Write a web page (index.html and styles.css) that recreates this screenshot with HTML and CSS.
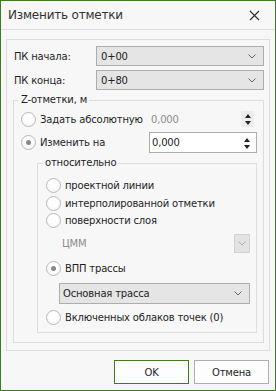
FILE: index.html
```html
<!DOCTYPE html>
<html lang="ru">
<head>
<meta charset="utf-8">
<title>Изменить отметки</title>
<link rel="stylesheet" href="styles.css">
</head>
<body>
<div class="win">
  <div class="titlebar">
    <span class="title">Изменить отметки</span>
    <svg class="close" width="11" height="11" viewBox="0 0 11 11"><path d="M1 1 L10 10 M10 1 L1 10" stroke="#333" stroke-width="1.2" fill="none"/></svg>
  </div>
  <div class="content">
    <div class="panel">
      <div class="row first">
        <span class="lbl">ПК начала:</span>
        <div class="select pk"><span>0+00</span><svg class="chev" width="8" height="5" viewBox="0 0 8 5"><path d="M0.5 0.5 L4 4 L7.5 0.5" stroke="#666" fill="none"/></svg></div>
      </div>
      <div class="row second">
        <span class="lbl">ПК конца:</span>
        <div class="select pk"><span>0+80</span><svg class="chev" width="8" height="5" viewBox="0 0 8 5"><path d="M0.5 0.5 L4 4 L7.5 0.5" stroke="#666" fill="none"/></svg></div>
      </div>
      <fieldset class="grp zgrp">
        <legend>Z-отметки, м</legend>
        <div class="zrow abs">
          <span class="radio"></span>
          <span class="rtext">Задать абсолютную</span>
          <span class="dval">0,000</span>
          <span class="spin dis"><i class="up"></i><i class="down"></i></span>
        </div>
        <div class="zrow chg">
          <span class="radio on"></span>
          <span class="rtext">Изменить на</span>
          <div class="input"><span>0,000</span><span class="spin"><i class="up"></i><i class="down"></i></span></div>
        </div>
        <fieldset class="grp relgrp">
          <legend>относительно</legend>
          <div class="rrow h18"><span class="radio"></span><span class="rtext">проектной линии</span></div>
          <div class="rrow h18"><span class="radio"></span><span class="rtext">интерполированной отметки</span></div>
          <div class="rrow h17"><span class="radio"></span><span class="rtext">поверхности слоя</span></div>
          <div class="dtmrow">
            <span class="dtm">ЦММ</span>
            <span class="dbtn"><svg width="8" height="5" viewBox="0 0 8 5"><path d="M0.5 0.5 L4 4 L7.5 0.5" stroke="#b0b0b0" fill="none"/></svg></span>
          </div>
          <div class="rrow vpp"><span class="radio on"></span><span class="rtext">ВПП трассы</span></div>
          <div class="select route"><span>Основная трасса</span><svg class="chev" width="8" height="5" viewBox="0 0 8 5"><path d="M0.5 0.5 L4 4 L7.5 0.5" stroke="#666" fill="none"/></svg></div>
          <div class="rrow last"><span class="radio"></span><span class="rtext">Включенных облаков точек (0)</span></div>
        </fieldset>
      </fieldset>
    </div>
    <div class="buttons">
      <button class="btn ok">OK</button>
      <button class="btn">Отмена</button>
    </div>
  </div>
</div>
</body>
</html>
```
FILE: styles.css
```css
* { box-sizing: border-box; }
html, body { margin: 0; padding: 0; }
body {
  width: 276px;
  height: 391px;
  font-family: "DejaVu Sans", "Liberation Sans", sans-serif;
  font-size: 10px;
  letter-spacing: -0.18px;
  color: #1e1e1e;
  background: #f7f7f7;
}
.win {
  width: 276px;
  height: 391px;
  border: 1px solid #3d7b22;
  background: #f7f7f7;
  display: flex;
  flex-direction: column;
}
.titlebar {
  height: 29px;
  border-bottom: 1px solid #dedede;
  display: flex;
  align-items: center;
  justify-content: space-between;
  padding: 0 15px 0 7px;
  flex: none;
}
.title {
  font-size: 12px;
  letter-spacing: -0.2px;
  color: #333;
}
.close { display: block; margin-top: 1px; }
.content {
  flex: 1;
  display: flex;
  flex-direction: column;
}
.panel {
  margin: 9px 0 0 5px;
  width: 264px;
  height: 312px;
  border: 1px solid #dcdcdc;
  display: flex;
  flex-direction: column;
}
.row {
  display: flex;
  align-items: center;
  height: 20px;
}
.row.first { margin-top: 6px; }
.row.second { margin-top: 4px; }
.lbl {
  width: 89px;
  padding-left: 7px;
  flex: none;
}
.select {
  height: 20px;
  border: 1px solid #adadad;
  background: #e5e5e5;
  display: flex;
  align-items: center;
  justify-content: space-between;
  padding: 0 7px 0 4px;
}
.select.pk { width: 168px; }
.chev { display: block; }
.grp {
  margin: 0;
  padding: 0;
  border: 1px solid #dcdcdc;
  min-width: 0;
}
.grp legend {
  padding: 0 2px;
  line-height: 14px;
  height: 14px;
  color: #1e1e1e;
}
.zgrp {
  margin: 3px 0 0 6px;
  width: 251px;
  height: 250px;
  display: flex;
  flex-direction: column;
}
.zgrp > legend { margin-left: 5px; }
.zrow {
  display: flex;
  align-items: center;
}
.zrow.abs { height: 18px; margin-top: 3px; }
.zrow.chg { height: 21px; margin-top: 4px; }
.radio {
  width: 15px;
  height: 15px;
  border-radius: 50%;
  border: 1px solid #b9b9b9;
  background: radial-gradient(circle at 50% 40%, #ffffff 40%, #f0f0f0 100%);
  flex: none;
  display: flex;
  align-items: center;
  justify-content: center;
}
.radio.on::after {
  content: "";
  width: 5px;
  height: 5px;
  border-radius: 50%;
  background: #8a8a8a;
}
.zrow .radio { margin-left: 7px; }
.rtext { margin-left: 4px; white-space: nowrap; }
.abs .rtext { width: 111px; flex: none; }
.dval {
  color: #8c8c8c;
}
.spin {
  width: 13px;
  height: 16px;
  display: flex;
  flex-direction: column;
  align-items: center;
  justify-content: space-between;
  padding: 3px 0 2px;
}
.spin.dis {
  margin-left: auto;
  margin-right: 9px;
  background: #ececec;
}
.spin i {
  display: block;
  width: 0;
  height: 0;
  border-left: 3.5px solid transparent;
  border-right: 3.5px solid transparent;
}
.spin .up { border-bottom: 4px solid #222; }
.spin .down { border-top: 4px solid #222; }
.chg .rtext { width: 109px; flex: none; }
.input {
  width: 108px;
  height: 21px;
  border: 1px solid #acacac;
  background: #ffffff;
  display: flex;
  align-items: center;
  justify-content: space-between;
  padding: 0 3px 0 2px;
}
.relgrp {
  margin: 3px 0 0 23px;
  width: 220px;
  height: 177px;
  display: flex;
  flex-direction: column;
}
.relgrp > legend { margin-left: 5px; }
.rrow {
  display: flex;
  align-items: center;
}
.rrow .radio { margin-left: 8px; }
.rrow.h18 { height: 18px; }
.rrow.h17 { height: 17px; }
.rrow:first-of-type { margin-top: 6px; }
.dtmrow {
  display: flex;
  align-items: center;
  height: 19px;
  margin-top: 5px;
}
.dtm {
  margin-left: 24px;
  color: #8c8c8c;
}
.dbtn {
  margin-left: auto;
  margin-right: 6px;
  width: 16px;
  height: 19px;
  border: 1px solid #d2d2d2;
  background: #e3e3e3;
  display: flex;
  align-items: center;
  justify-content: center;
}
.rrow.vpp { height: 18px; margin-top: 6px; }
.select.route {
  width: 191px;
  height: 21px;
  margin: 6px 0 0 21px;
  padding-left: 3px;
}
.rrow.last { height: 18px; margin-top: 4px; }
.buttons {
  display: flex;
  justify-content: flex-end;
  gap: 5px;
  padding: 9px 6px 0 0;
}
.btn {
  width: 75px;
  height: 24px;
  border: 1px solid #adadad;
  background: #fdfdfd;
  font-family: "DejaVu Sans", "Liberation Sans", sans-serif;
  font-size: 10px;
  letter-spacing: -0.18px;
  color: #1e1e1e;
  padding: 0;
}
.btn.ok { border-color: #3d7b22; }
```
